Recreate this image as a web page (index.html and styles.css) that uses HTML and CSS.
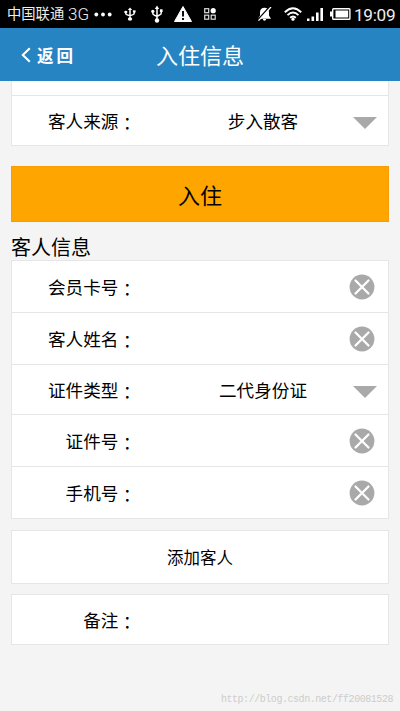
FILE: index.html
```html
<!DOCTYPE html>
<html lang="zh-CN">
<head>
<meta charset="utf-8">
<title>入住信息</title>
<link rel="stylesheet" href="styles.css">
</head>
<body>
<svg width="0" height="0" class="defs">
  <symbol id="usb" viewBox="0 0 12 18" preserveAspectRatio="none">
    <path d="M6 3v12M1.800 6v2.200q0 1.300 1.500 1.900L6 11.400l2.700-1.500q1.500-.7 1.500-2V5.500" fill="none" stroke="#fff" stroke-width="1.500"/>
    <path d="M6 .5 8.200 4H3.800Z" fill="#fff"/>
    <circle cx="6" cy="15.500" r="2.200" fill="#fff"/>
    <circle cx="1.800" cy="6.300" r="1.600" fill="#fff"/>
    <rect x="8.900" y="4.300" width="2.700" height="2.700" fill="#fff"/>
  </symbol>
  <symbol id="clear" viewBox="0 0 26 26">
    <circle cx="13" cy="13" r="12.400" fill="#a9a9a9"/>
    <path d="M6.500 6.500l13 13M19.500 6.500l-13 13" stroke="#fff" stroke-width="2.300" stroke-linecap="round"/>
  </symbol>
  <symbol id="drop" viewBox="0 0 24 12">
    <path d="M0 0h24L12 12Z" fill="#a9a9a9"/>
  </symbol>
</svg>
<div class="status">
  <span class="carrier">中国联通</span><span class="net">3G</span>
  <svg class="dots" width="18" height="5" viewBox="0 0 18 5"><g fill="#fff"><circle cx="2.300" cy="2.500" r="1.900"/><circle cx="9" cy="2.500" r="1.900"/><circle cx="15.700" cy="2.500" r="1.900"/></g></svg>
  <svg class="usb-small" width="12" height="14"><use href="#usb"/></svg>
  <svg class="usb-large" width="12" height="18"><use href="#usb"/></svg>
  <svg class="warn" width="18" height="16" viewBox="0 0 18 16"><path d="M9 .5 17.500 15.500H.5Z" fill="#fff" stroke="#fff" stroke-linejoin="round"/><path d="M9 5v5.500M9 12v2" stroke="#111" stroke-width="2"/></svg>
  <svg class="apps" width="12" height="12" viewBox="0 0 12 12"><g fill="none" stroke="#ddd" stroke-width="1.200"><rect x=".7" y=".7" width="4" height="4"/><rect x=".7" y="7.200" width="4" height="4"/><rect x="7.200" y="7.200" width="4" height="4"/></g><circle cx="9.200" cy="2.700" r="2.600" fill="#fff"/></svg>
  <svg class="bell" width="15" height="14" viewBox="0 0 15 14"><path d="M1 11.800 3 8.500V5Q3.500 .8 7.500 .8T12 5V8.500l2 3.300ZM5.800 12h3.400q-.3 1.700-1.700 1.700T5.800 12Z" fill="#fff"/><path d="M12.600 0 .8 13" stroke="#000" stroke-width="1.800"/><path d="M14 0 1.500 13.600" stroke="#fff" stroke-width="1.300"/></svg>
  <svg class="wifi" width="18" height="14" viewBox="0 0 18 14"><g fill="none" stroke="#fff" stroke-width="1.900"><path d="M.8 5.200Q9-2.800 17.200 5.200"/><path d="M3.500 8.100q5.500-5 11 0"/><path d="M6.100 10.700q2.900-2.500 5.800 0"/></g><circle cx="9" cy="12.200" r="1.600" fill="#fff"/></svg>
  <svg class="signal" width="16" height="13" viewBox="0 0 16 13"><path d="M0 10.500h2.500V13H0ZM4.500 8.500h2.600V13H4.500ZM9 4.500h2.600V13H9ZM13.400 0H16v13h-2.600Z" fill="#fff"/></svg>
  <svg class="battery" width="21" height="12" viewBox="0 0 21 12"><rect x="2.700" y=".7" width="17.200" height="10.600" rx=".8" fill="none" stroke="#fff" stroke-width="1.400"/><rect x="5.500" y="2.500" width="12.700" height="7" fill="#fff"/><path d="M0 3.500h2v5H0Z" fill="#fff"/></svg>
  <span class="time">19:09</span>
</div>
<header class="bar">
  <div class="back"><svg width="10" height="16" viewBox="0 0 10 16"><path d="M8.800 1.200 1.800 8l7 6.800" fill="none" stroke="#fff" stroke-width="2.100"/></svg><span>返回</span></div>
  <h1>入住信息</h1>
</header>
<main>
  <section class="card source">
    <div class="row stub"></div>
    <div class="row r-source"><label>客人来源<i lang="zh-TW">：</i></label><span class="value">步入散客</span><svg class="arrow" width="24" height="12"><use href="#drop"/></svg></div>
  </section>
  <button class="checkin">入住</button>
  <h2>客人信息</h2>
  <section class="card guest">
    <div class="row"><label>会员卡号<i lang="zh-TW">：</i></label><svg class="clear" width="26" height="26"><use href="#clear"/></svg></div>
    <div class="row"><label>客人姓名<i lang="zh-TW">：</i></label><svg class="clear" width="26" height="26"><use href="#clear"/></svg></div>
    <div class="row r-type"><label>证件类型<i lang="zh-TW">：</i></label><span class="value">二代身份证</span><svg class="arrow" width="24" height="12"><use href="#drop"/></svg></div>
    <div class="row"><label>证件号<i lang="zh-TW">：</i></label><svg class="clear" width="26" height="26"><use href="#clear"/></svg></div>
    <div class="row"><label>手机号<i lang="zh-TW">：</i></label><svg class="clear" width="26" height="26"><use href="#clear"/></svg></div>
  </section>
  <button class="card add">添加客人</button>
  <section class="card remark"><div class="row"><label>备注<i lang="zh-TW">：</i></label></div></section>
</main>
<footer>http://blog.csdn.net/ff20081528</footer>
</body>
</html>
```
FILE: styles.css
```css
* { box-sizing: border-box; }
body {
  margin: 0;
  width: 400px;
  height: 711px;
  overflow: hidden;
  display: flex;
  flex-direction: column;
  background: #f4f4f4;
  color: #000;
  font-family: "Noto Sans CJK SC", sans-serif;
}
svg { display: block; flex: none; }
.defs { position: absolute; }
.status {
  height: 28px;
  flex: none;
  display: flex;
  align-items: center;
  padding-left: 7px;
  background: #000;
  color: #eee;
  white-space: nowrap;
}
.carrier { width: 61px; padding-bottom: 2px; font-size: 14.300px; line-height: 26px; }
.net { width: 26px; font: 17px/28px Roboto, sans-serif; font-weight: 300; }
.usb-small { margin-left: 12px; }
.usb-large { margin-left: 15px; }
.warn { margin-left: 11px; }
.apps { margin-left: 12px; }
.bell { margin-left: 41px; }
.wifi { margin-left: 12px; }
.signal { margin-left: 5px; }
.battery { margin-left: 7px; }
.time { margin-left: 3px; padding-top: 2px; font: 17.200px/28px Roboto, sans-serif; letter-spacing: -0.3px; }
.bar {
  height: 53px;
  flex: none;
  display: grid;
  grid-template-columns: 100px 200px 100px;
  align-items: center;
  background: #2684c3;
  color: #fff;
}
.back {
  display: flex;
  align-items: center;
  gap: 6px;
  padding-left: 21px;
  font-size: 16.500px;
  font-weight: 700;
  letter-spacing: 3px;
  line-height: 24px;
}
h1 { margin: 0; font-size: 22px; font-weight: 400; line-height: 28px; padding-bottom: 2px; text-align: center; }
main { display: flex; flex-direction: column; padding: 0 11px; }
.card { background: #fff; border: 1px solid #e6e6e6; }
.source { border-top: 0; margin-bottom: 20px; }
.row { height: 52px; display: flex; align-items: center; border-bottom: 1px solid #e6e6e6; }
.row:last-child { border-bottom: 0; }
.stub { height: 15px; }
.r-source { height: 49px; }
label { width: 124px; flex: none; text-align: right; font-size: 17.600px; line-height: 26px; }
label i { font-family: "Noto Sans CJK TC", sans-serif; font-style: normal; line-height: 1; vertical-align: -1.500px; }
.value { flex: 1; padding-left: 16px; font-size: 17.600px; line-height: 26px; text-align: center; }
.arrow { margin: 5px 11px 0 -21px; }
.clear { margin: 0 13px 0 auto; }
.checkin {
  height: 56px;
  padding: 0;
  border: 1px solid #f99c0a;
  background: #ffa500;
  color: #000;
  font: 22px/54px "Noto Sans CJK SC", sans-serif;
}
h2 { margin: 11px 0 0; height: 27px; font-size: 20px; font-weight: 400; line-height: 28px; }
.guest { height: 259px; }
.r-type { height: 50px; }
.add { height: 54px; margin: 11px 0 10px; padding: 0; color: #000; font: 16.500px/52px "Noto Sans CJK SC", sans-serif; }
.remark { height: 51px; }
.remark .row { height: 49px; }
footer {
  margin: auto 7px 4px 0;
  text-align: right;
  color: #cdcdcb;
  font: 10px/14px "Liberation Mono", monospace;
  letter-spacing: -0.45px;
}
```
